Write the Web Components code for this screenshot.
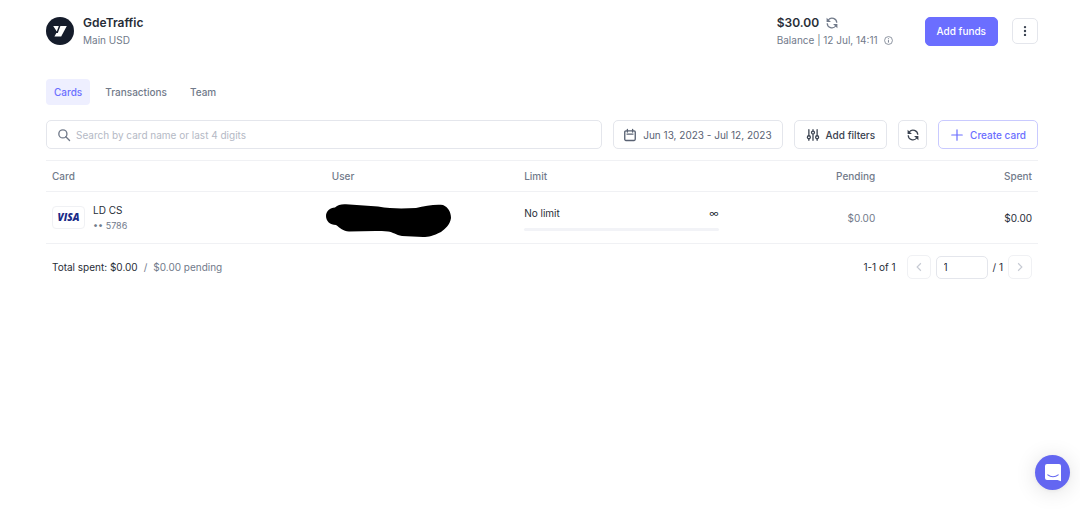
<!DOCTYPE html>
<html lang="en">
<head>
<meta charset="utf-8">
<meta name="viewport" content="width=device-width, initial-scale=1">
<title>Cards</title>
<style>
    body {
        margin: 0;
        min-height: 100vh;
        background: #fff;
        color: #272d37;
        font-family: Inter, "Liberation Sans", sans-serif;
        font-size: 10px;
        line-height: 16px;
        --accent: #6b6eff;
        --muted: #717a8a;
        --line: #e4e6ec;
        --rule: #f0f1f4;
    }
</style>
</head>
<body>
<cards-page></cards-page>

<script>
const ICONS = {
    logo: ['0 0 28 28', `
        <circle cx="14" cy="14" r="14" fill="#151c2b"/>
        <path d="M7.2 9h5.6l-2 5.6z M14.4 9h6.4l-5.6 10.4H8.4l2-3.4h1.4z" fill="#fff"/>`],
    sync: ['0 0 16 16', `
        <g fill="none" stroke="currentColor" stroke-width="1.6">
            <path d="M3 4a6.4 6.4 0 0 1 11.4 3.8M13 12a6.4 6.4 0 0 1-11.4-3.8"/>
        </g>
        <path d="M.8 1v5.8h5.8zM15.2 15V9.2H9.4z" fill="currentColor"/>`],
    info: ['0 0 16 16', `
        <circle cx="8" cy="8" r="7" fill="none" stroke="currentColor" stroke-width="1.4"/>
        <path d="M7.9 7.3v4.4M7.9 4v1.7" stroke="currentColor" stroke-width="1.7"/>`],
    dots: ['0 0 16 16', `
        <g fill="currentColor"><circle cx="8" cy="2.8" r="1.6"/><circle cx="8" cy="8" r="1.6"/><circle cx="8" cy="13.2" r="1.6"/></g>`],
    search: ['0 0 16 16', `
        <g fill="none" stroke="currentColor" stroke-width="1.8" stroke-linecap="round"><circle cx="6.5" cy="6.5" r="5.4"/><path d="M10.4 10.4l5 5"/></g>`],
    calendar: ['0 0 16 16', `
        <g fill="none" stroke="currentColor" stroke-width="1.8" stroke-linecap="round" stroke-linejoin="round">
            <rect x="1" y="2.5" width="14" height="12.8" rx="1.5"/><path d="M4.5 .5v3.5M11.500 .5v3.5M4 6.8h8"/>
        </g>`],
    filters: ['0 0 16 16', `
        <g fill="none" stroke="currentColor" stroke-width="1.7" stroke-linecap="round">
            <path d="M2.5 1v7.5M2.5 13.5v1.5M8 1v1M8 7.5v7.5M13.5 1v7.5M13.5 13.5v1.5"/>
            <circle cx="2.5" cy="11" r="2"/><circle cx="8" cy="4.8" r="2"/><circle cx="13.5" cy="11" r="2"/>
        </g>`],
    plus: ['0 0 16 16', `<path d="M8 1v14M1 8h14" stroke="currentColor" stroke-width="1.6" stroke-linecap="round"/>`],
    prev: ['0 0 16 16', `<path d="M10.5 3L5.5 8l5 5" fill="none" stroke="currentColor" stroke-width="1.5"/>`],
    next: ['0 0 16 16', `<path d="M5.5 3l5 5-5 5" fill="none" stroke="currentColor" stroke-width="1.5"/>`],
    chat: ['0 0 16 18', `
        <path d="M2 0h12a2 2 0 0 1 2 2v15.2L12.6 16H2a2 2 0 0 1-2-2V2a2 2 0 0 1 2-2z" fill="#fff"/>
        <path d="M2.8 10.9c3 2.4 7.4 2.4 10.4 0" fill="none" stroke="#6366f1" stroke-width="1.1" stroke-linecap="round"/>`]
};

// base class: opens a shadow root and fills it from render()
class BaseElement extends HTMLElement {
    constructor() {
        super();
        this.attachShadow({ mode: 'open' });
    }

    connectedCallback() {
        this.shadowRoot.innerHTML = this.render();
    }
}

class UiIcon extends BaseElement {
    render() {
        const [viewBox, body] = ICONS[this.getAttribute('name')];
        const w = this.getAttribute('width') || 12;
        const h = this.getAttribute('height') || w;
        return `
            <style>
                :host { display: inline-flex; flex: none; }
                svg { display: block; overflow: visible; }
            </style>
            <svg width="${w}" height="${h}" viewBox="${viewBox}" aria-hidden="true">${body}</svg>
        `;
    }
}

class UiButton extends BaseElement {
    render() {
        const label = this.getAttribute('label');
        return `
            <style>
                :host { display: inline-flex; flex: none; }
                button {
                    display: flex;
                    align-items: center;
                    justify-content: center;
                    gap: 7px;
                    box-sizing: border-box;
                    height: 29px;
                    padding: 0 11px 0 12px;
                    border: 1px solid var(--line);
                    border-radius: 5px;
                    background: #fff;
                    color: #3a4250;
                    font: inherit;
                    font-weight: 500;
                    white-space: nowrap;
                    cursor: pointer;
                }
                :host([kind="primary"]) button { background: var(--accent); border-color: var(--accent); color: #fff; padding: 0 11px; }
                :host([kind="outline"]) button { border-color: #c9caff; color: var(--accent); }
                :host([kind="date"]) button { color: #596273; font-weight: 400; padding: 0 10px; }
                :host([kind="square"]) button { width: 29px; padding: 0; }
                :host([kind="menu"]) button { width: 26px; height: 26px; padding: 0; }
                :host([kind="pager"]) button { width: 24px; height: 24px; padding: 0; border-color: var(--rule); color: #c6cad3; }
            </style>
            <button type="button" ${label ? `aria-label="${label}"` : ''} ${this.hasAttribute('disabled') ? 'disabled' : ''}><slot></slot></button>
        `;
    }
}

class AccountHeader extends BaseElement {
    render() {
        return `
            <style>
                :host { display: flex; align-items: center; }
                .account { display: flex; align-items: center; gap: 9px; flex: 1; }
                .name, .amount { font-size: 12px; line-height: 18px; font-weight: 600; }
                .sub { color: var(--muted); line-height: 16px; display: flex; align-items: center; gap: 6px; }
                .amount { display: flex; align-items: center; gap: 7px; }
                .amount ui-icon { color: var(--muted); }
                .actions { display: flex; align-items: center; gap: 14px; margin-left: 32px; }
            </style>
            <div class="account">
                <ui-icon name="logo" width="28"></ui-icon>
                <div>
                    <div class="name">GdeTraffic</div>
                    <div class="sub">Main USD</div>
                </div>
            </div>
            <div>
                <div class="amount">$30.00 <ui-icon name="sync"></ui-icon></div>
                <div class="sub">Balance | 12 Jul, 14:11 <ui-icon name="info" width="9"></ui-icon></div>
            </div>
            <div class="actions">
                <ui-button kind="primary">Add funds</ui-button>
                <ui-button kind="menu" label="More"><ui-icon name="dots"></ui-icon></ui-button>
            </div>
        `;
    }
}

class SectionTabs extends BaseElement {
    render() {
        return `
            <style>
                :host { display: block; }
                nav { display: flex; gap: 7px; }
                a {
                    padding: 5px 8px;
                    border-radius: 4px;
                    color: var(--muted);
                    font-weight: 500;
                    text-decoration: none;
                }
                a[aria-current] { background: #eeefff; color: var(--accent); }
            </style>
            <nav>
                <a href="#cards" aria-current="page">Cards</a>
                <a href="#transactions">Transactions</a>
                <a href="#team">Team</a>
            </nav>
        `;
    }
}

class CardToolbar extends BaseElement {
    render() {
        return `
            <style>
                :host { display: flex; gap: 11px; }
                label {
                    display: flex;
                    align-items: center;
                    gap: 6px;
                    flex: 1;
                    min-width: 0;
                    box-sizing: border-box;
                    height: 29px;
                    padding: 0 11px;
                    border: 1px solid var(--line);
                    border-radius: 5px;
                    color: var(--muted);
                }
                input { flex: 1; min-width: 0; padding: 0; border: 0; outline: 0; background: none; font: inherit; color: inherit; }
                input::placeholder { color: #b4b9c5; opacity: 1; }
            </style>
            <label>
                <ui-icon name="search"></ui-icon>
                <input type="search" aria-label="Search cards" placeholder="Search by card name or last 4 digits">
            </label>
            <ui-button kind="date"><ui-icon name="calendar"></ui-icon>Jun 13, 2023 - Jul 12, 2023</ui-button>
            <ui-button><ui-icon name="filters"></ui-icon>Add filters</ui-button>
            <ui-button kind="square" label="Refresh"><ui-icon name="sync"></ui-icon></ui-button>
            <ui-button kind="outline"><ui-icon name="plus"></ui-icon>Create card</ui-button>
        `;
    }
}

class CardsTable extends BaseElement {
    render() {
        return `
            <style>
                :host { display: block; }
                table { width: 100%; table-layout: fixed; border-collapse: collapse; border-top: 1px solid var(--rule); }
                tr { border-bottom: 1px solid var(--rule); }
                th, td { padding: 0 6px; text-align: left; }
                th { height: 30px; color: var(--muted); font-weight: 500; }
                td { height: 51px; }
                .num { text-align: right; }
                .muted { color: var(--muted); }
                .card { display: flex; align-items: center; gap: 8px; }
                .visa {
                    box-sizing: border-box;
                    width: 33px;
                    height: 23px;
                    border: 1px solid var(--rule);
                    border-radius: 4px;
                    color: #1a2b87;
                    font: italic 800 10px/21px "Open Sans", sans-serif;
                    text-align: center;
                }
                .digits { color: var(--muted); font-size: 9px; }
                .hidden-user { display: block; margin-left: -6px; padding-top: 6px; }
                .limit { display: flex; justify-content: space-between; }
                .bar { height: 3px; margin-top: 7px; border-radius: 2px; background: #f2f3f7; }
            </style>
            <table>
                <colgroup>
                    <col style="width:28.2%"><col style="width:19.4%"><col style="width:20.8%"><col style="width:15.8%"><col style="width:15.8%">
                </colgroup>
                <thead>
                    <tr><th>Card</th><th>User</th><th>Limit</th><th class="num">Pending</th><th class="num">Spent</th></tr>
                </thead>
                <tbody>
                    <tr>
                        <td>
                            <div class="card">
                                <div class="visa">VISA</div>
                                <div>
                                    <div>LD CS</div>
                                    <div class="digits">•• 5786</div>
                                </div>
                            </div>
                        </td>
                        <td>
                            <svg class="hidden-user" width="125" height="33" viewBox="0 0 125 33" role="img" aria-label="Hidden user">
                                <path d="M0 12C0 7 4 4 9 3.5C12 1 15 0 20 .3L52 2.5C66 5 78 4.5 90 4C99 2 109 0 117 1C122 3 125 8 125 14C124 21 119 25 115 28C107 32 103 33 97 33L76 32C70 31 67 28 62 27.5C50 26.5 36 27.5 23 27.5C17 27 14 24 10 21C4 21 0 17 0 12Z"/>
                            </svg>
                        </td>
                        <td>
                            <div class="limit"><span>No limit</span><span>∞</span></div>
                            <div class="bar"></div>
                        </td>
                        <td class="num muted">$0.00</td>
                        <td class="num">$0.00</td>
                    </tr>
                </tbody>
            </table>
        `;
    }
}

class TableFooter extends BaseElement {
    render() {
        return `
            <style>
                :host { display: flex; align-items: center; justify-content: space-between; padding: 0 6px; }
                .muted { color: var(--muted); }
                .totals { display: flex; gap: 6px; }
                .pager { display: flex; align-items: center; gap: 5px; }
                .count { margin-right: 6px; }
                input {
                    box-sizing: border-box;
                    width: 52px;
                    height: 23px;
                    padding: 0 7px;
                    border: 1px solid var(--line);
                    border-radius: 5px;
                    color: inherit;
                    font: inherit;
                }
            </style>
            <div class="totals">
                <span>Total spent: $0.00</span>
                <span class="muted">/</span>
                <span class="muted">$0.00 pending</span>
            </div>
            <div class="pager">
                <span class="count">1-1 of 1</span>
                <ui-button kind="pager" label="Previous page" disabled><ui-icon name="prev"></ui-icon></ui-button>
                <input type="text" value="1" aria-label="Page">
                <span>/ 1</span>
                <ui-button kind="pager" label="Next page" disabled><ui-icon name="next"></ui-icon></ui-button>
            </div>
        `;
    }
}

class ChatLauncher extends BaseElement {
    render() {
        return `
            <style>
                :host { position: fixed; right: 10px; bottom: 41px; }
                button {
                    display: flex;
                    align-items: center;
                    justify-content: center;
                    width: 35px;
                    height: 35px;
                    padding: 0;
                    border: 0;
                    border-radius: 50%;
                    background: #6366f1;
                    box-shadow: 0 1px 4px rgba(0,0,0,0.06), 0 2px 22px rgba(0,0,0,0.12);
                    cursor: pointer;
                }
            </style>
            <button type="button" aria-label="Open chat"><ui-icon name="chat" width="16" height="18"></ui-icon></button>
        `;
    }
}

class CardsPage extends BaseElement {
    render() {
        return `
            <style>
                :host { display: block; padding: 14px 42px 40px 46px; }
                section-tabs { margin-top: 31px; }
                card-toolbar { margin: 15px 0 11px; }
                table-footer { margin-top: 11px; }
            </style>
            <account-header></account-header>
            <section-tabs></section-tabs>
            <card-toolbar></card-toolbar>
            <cards-table></cards-table>
            <table-footer></table-footer>
            <chat-launcher></chat-launcher>
        `;
    }
}

customElements.define('ui-icon', UiIcon);
customElements.define('ui-button', UiButton);
customElements.define('account-header', AccountHeader);
customElements.define('section-tabs', SectionTabs);
customElements.define('card-toolbar', CardToolbar);
customElements.define('cards-table', CardsTable);
customElements.define('table-footer', TableFooter);
customElements.define('chat-launcher', ChatLauncher);
customElements.define('cards-page', CardsPage);
</script>
</body>
</html>
